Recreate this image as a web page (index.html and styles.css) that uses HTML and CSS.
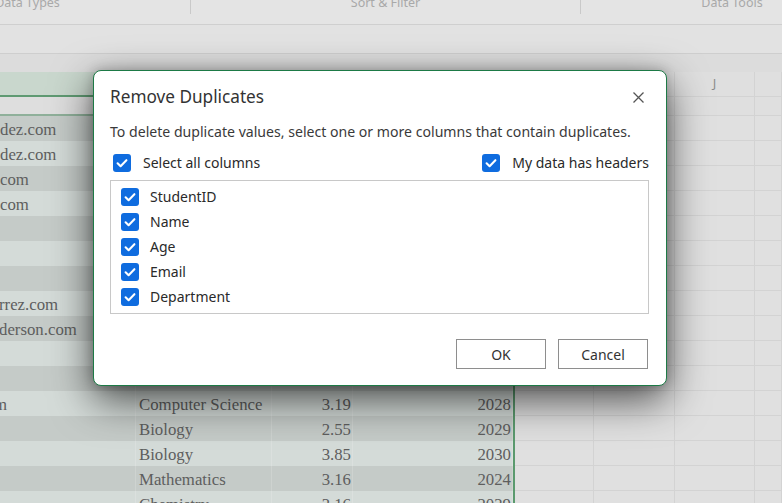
FILE: index.html
```html
<!DOCTYPE html>
<html lang="en">
<head>
<meta charset="utf-8">
<title>Remove Duplicates</title>
<link rel="stylesheet" href="styles.css">
</head>
<body>
<div class="app">
  <div class="ribbon">
    <div class="group g1"><span>Data Types</span></div>
    <div class="group g2"><span>Sort &amp; Filter</span></div>
    <div class="group g3"><span>Data Tools</span></div>
  </div>
  <div class="formula"></div>
  <div class="spacer"></div>
  <div class="sheet">
    <div class="row head">
      <div class="c s"></div><div class="c s"></div><div class="c s"></div><div class="c s"></div><div class="c s gl"></div>
      <div class="c r"></div><div class="c r"></div><div class="c r">J</div><div class="c r"></div>
    </div>
    <div class="row first">
      <div class="c s"></div><div class="c s"></div><div class="c s"></div><div class="c s"></div><div class="c s"></div>
      <div class="c r"></div><div class="c r"></div><div class="c r"></div><div class="c r"></div>
    </div>
    <div class="row dark"><div class="c s"><span class="t">dez.com</span></div><div class="c s"></div><div class="c s"></div><div class="c s"></div><div class="c gl"></div><div class="c r"></div><div class="c r"></div><div class="c r"></div><div class="c r"></div></div>
    <div class="row light"><div class="c s"><span class="t">dez.com</span></div><div class="c s"></div><div class="c s"></div><div class="c s"></div><div class="c gl"></div><div class="c r"></div><div class="c r"></div><div class="c r"></div><div class="c r"></div></div>
    <div class="row dark"><div class="c s"><span class="t">com</span></div><div class="c s"></div><div class="c s"></div><div class="c s"></div><div class="c gl"></div><div class="c r"></div><div class="c r"></div><div class="c r"></div><div class="c r"></div></div>
    <div class="row light"><div class="c s"><span class="t">com</span></div><div class="c s"></div><div class="c s"></div><div class="c s"></div><div class="c gl"></div><div class="c r"></div><div class="c r"></div><div class="c r"></div><div class="c r"></div></div>
    <div class="row dark"><div class="c s"></div><div class="c s"></div><div class="c s"></div><div class="c s"></div><div class="c gl"></div><div class="c r"></div><div class="c r"></div><div class="c r"></div><div class="c r"></div></div>
    <div class="row light"><div class="c s"></div><div class="c s"></div><div class="c s"></div><div class="c s"></div><div class="c gl"></div><div class="c r"></div><div class="c r"></div><div class="c r"></div><div class="c r"></div></div>
    <div class="row dark"><div class="c s"></div><div class="c s"></div><div class="c s"></div><div class="c s"></div><div class="c gl"></div><div class="c r"></div><div class="c r"></div><div class="c r"></div><div class="c r"></div></div>
    <div class="row light"><div class="c s"><span class="t cut1">rrez.com</span></div><div class="c s"></div><div class="c s"></div><div class="c s"></div><div class="c gl"></div><div class="c r"></div><div class="c r"></div><div class="c r"></div><div class="c r"></div></div>
    <div class="row dark"><div class="c s"><span class="t cut2">derson.com</span></div><div class="c s"></div><div class="c s"></div><div class="c s"></div><div class="c gl"></div><div class="c r"></div><div class="c r"></div><div class="c r"></div><div class="c r"></div></div>
    <div class="row light"><div class="c s"></div><div class="c s"></div><div class="c s"></div><div class="c s"></div><div class="c gl"></div><div class="c r"></div><div class="c r"></div><div class="c r"></div><div class="c r"></div></div>
    <div class="row dark"><div class="c s"></div><div class="c s"></div><div class="c s"></div><div class="c s"></div><div class="c gl"></div><div class="c r"></div><div class="c r"></div><div class="c r"></div><div class="c r"></div></div>
    <div class="row light"><div class="c s"><span class="t cut3">m</span></div><div class="c s">Computer Science</div><div class="c s n">3.19</div><div class="c s n">2028</div><div class="c gl"></div><div class="c r"></div><div class="c r"></div><div class="c r"></div><div class="c r"></div></div>
    <div class="row dark"><div class="c s"></div><div class="c s">Biology</div><div class="c s n">2.55</div><div class="c s n">2029</div><div class="c gl"></div><div class="c r"></div><div class="c r"></div><div class="c r"></div><div class="c r"></div></div>
    <div class="row light"><div class="c s"></div><div class="c s">Biology</div><div class="c s n">3.85</div><div class="c s n">2030</div><div class="c gl"></div><div class="c r"></div><div class="c r"></div><div class="c r"></div><div class="c r"></div></div>
    <div class="row dark"><div class="c s"></div><div class="c s">Mathematics</div><div class="c s n">3.16</div><div class="c s n">2024</div><div class="c gl"></div><div class="c r"></div><div class="c r"></div><div class="c r"></div><div class="c r"></div></div>
    <div class="row light"><div class="c s"></div><div class="c s">Chemistry</div><div class="c s n">3.16</div><div class="c s n">2029</div><div class="c gl"></div><div class="c r"></div><div class="c r"></div><div class="c r"></div><div class="c r"></div></div>
  </div>

  <div class="dialog" role="dialog" aria-label="Remove Duplicates">
    <div class="dlg-head">
      <h1 class="dlg-title">Remove Duplicates</h1>
      <button class="close" aria-label="Close">
        <svg width="11" height="11" viewBox="0 0 11 11"><path d="M0.5 0.5 L10.5 10.5 M10.5 0.5 L0.5 10.5" stroke="#555" stroke-width="1.3" fill="none"/></svg>
      </button>
    </div>
    <p class="dlg-desc">To delete duplicate values, select one or more columns that contain duplicates.</p>
    <div class="opts">
      <label class="chk"><span class="box"><svg width="18" height="18" viewBox="0 0 18 18"><path d="M4.6 9.3 L7.6 12.2 L13.4 6.2" stroke="#fff" stroke-width="2.1" fill="none" stroke-linecap="round" stroke-linejoin="round"/></svg></span>Select all columns</label>
      <label class="chk"><span class="box"><svg width="18" height="18" viewBox="0 0 18 18"><path d="M4.6 9.3 L7.6 12.2 L13.4 6.2" stroke="#fff" stroke-width="2.1" fill="none" stroke-linecap="round" stroke-linejoin="round"/></svg></span>My data has headers</label>
    </div>
    <div class="list">
      <label class="chk item"><span class="box"><svg width="18" height="18" viewBox="0 0 18 18"><path d="M4.6 9.3 L7.6 12.2 L13.4 6.2" stroke="#fff" stroke-width="2.1" fill="none" stroke-linecap="round" stroke-linejoin="round"/></svg></span>StudentID</label>
      <label class="chk item"><span class="box"><svg width="18" height="18" viewBox="0 0 18 18"><path d="M4.6 9.3 L7.6 12.2 L13.4 6.2" stroke="#fff" stroke-width="2.1" fill="none" stroke-linecap="round" stroke-linejoin="round"/></svg></span>Name</label>
      <label class="chk item"><span class="box"><svg width="18" height="18" viewBox="0 0 18 18"><path d="M4.6 9.3 L7.6 12.2 L13.4 6.2" stroke="#fff" stroke-width="2.1" fill="none" stroke-linecap="round" stroke-linejoin="round"/></svg></span>Age</label>
      <label class="chk item"><span class="box"><svg width="18" height="18" viewBox="0 0 18 18"><path d="M4.6 9.3 L7.6 12.2 L13.4 6.2" stroke="#fff" stroke-width="2.1" fill="none" stroke-linecap="round" stroke-linejoin="round"/></svg></span>Email</label>
      <label class="chk item"><span class="box"><svg width="18" height="18" viewBox="0 0 18 18"><path d="M4.6 9.3 L7.6 12.2 L13.4 6.2" stroke="#fff" stroke-width="2.1" fill="none" stroke-linecap="round" stroke-linejoin="round"/></svg></span>Department</label>
    </div>
    <div class="actions">
      <button class="btn">OK</button>
      <button class="btn">Cancel</button>
    </div>
  </div>
</div>
</body>
</html>
```

FILE: styles.css
```css
* { box-sizing: border-box; }
html, body { margin: 0; padding: 0; }
body {
  width: 782px;
  height: 503px;
  overflow: hidden;
  background: #e0e0e0;
  font-family: "Noto Sans", "Open Sans", sans-serif;
}
.app {
  position: relative;
  width: 782px;
  height: 503px;
  overflow: hidden;
}

/* ribbon */
.ribbon {
  display: flex;
  height: 25px;
  margin-left: -135px;
  background: #e4e4e4;
  border-bottom: 1px solid #cfcfcf;
}
.group {
  flex: none;
  height: 14px;
  display: flex;
  justify-content: center;
  align-items: flex-start;
  border-right: 1px solid #c9c9c9;
}
.group span {
  margin-top: -5px;
  font-size: 12.5px;
  line-height: 16px;
  color: #a9a9a9;
  white-space: nowrap;
}
.g1 { width: 326px; }
.g2 { width: 390px; }
.g3 { width: 302px; border-right: none; }

.formula {
  height: 29px;
  background: #e2e2e2;
  border-bottom: 1px solid #cecece;
}
.spacer {
  height: 18px;
  background: #dcdcdc;
}

/* sheet */
.row {
  display: grid;
  grid-template-columns: 136px 136px 81px 160px 2px 79px 81px 80px 1fr;
  height: 25px;
}
.c {
  font-family: "Liberation Serif", "Times New Roman", serif;
  font-size: 16.8px;
  line-height: 25px;
  padding-top: 1px;
  color: #5e5e5e;
  white-space: nowrap;
  overflow: hidden;
  padding-left: 3px;
}
.c.n { text-align: right; padding: 1px 1px 0 0; }
.s { border-right: 1px solid rgba(255,255,255,0.16); }
.r {
  background: #e0e0e0;
  border-right: 1px solid #d3d3d3;
  border-bottom: 1px solid #d3d3d3;
}
.row.dark .s { background: #c5cbc8; }
.row.light .s { background: #d4dbd8; }
.gl { background: #5b9a6e; }

.row.head { height: 25px; }
.row.head .s { background: #c9d7cd; border-right: none; border-bottom: 2px solid #5f9a72; }
.row.head .r {
  background: #dfdfdf;
  font-family: "Noto Sans", sans-serif;
  font-size: 13px;
  color: #8c8c8c;
  text-align: center;
  padding: 0 0 2px 0;
  line-height: 22px;
  border-right: 1px solid #d3d3d3;
}
.row.first { height: 19px; }
.row.first .s { background: #dedede; border-right: none; border-bottom: 2px solid #8fb09a; }
.row.first .r { background: #dfdfdf; }

.t { display: inline-block; margin-left: -3px; }
.t.cut1 { margin-left: -4px; }
.t.cut2 { margin-left: -4px; }
.t.cut3 { margin-left: -9px; }

/* dialog */
.dialog {
  position: absolute;
  left: 93px;
  top: 70px;
  width: 574px;
  height: 316px;
  background: #ffffff;
  border: 1px solid #1d7a46;
  border-radius: 8px;
  box-shadow: 0 14px 42px rgba(0,0,0,0.66), 0 0 12px rgba(0,0,0,0.22);
  display: flex;
  flex-direction: column;
  color: #262626;
}
.dlg-head {
  display: flex;
  justify-content: space-between;
  align-items: center;
  padding: 14px 22px 0 16px;
  height: 38px;
}
.dlg-title {
  margin: 0;
  font-size: 17.2px;
  font-weight: 400;
  line-height: 24px;
  color: #333333;
}
.close {
  border: none;
  background: none;
  padding: 0;
  width: 11px;
  height: 11px;
  display: block;
}
.close svg { display: block; }
.dlg-desc {
  margin: 13px 0 0 16px;
  font-size: 14.1px;
  line-height: 20px;
  color: #3a3a3a;
}
.opts {
  display: flex;
  justify-content: space-between;
  margin-top: 11px;
  padding: 0 17px 0 19px;
  height: 20px;
}
.chk {
  display: flex;
  align-items: center;
  gap: 12px;
  font-size: 14px;
  line-height: 20px;
  color: #2a2a2a;
}
.box {
  width: 18px;
  height: 18px;
  border-radius: 3px;
  background: #0f6cdf;
  display: block;
  flex: none;
}
.box svg { display: block; }
.list {
  margin: 7px 17px 0 16px;
  height: 134px;
  border: 1px solid #c8c8c8;
  padding: 3px 10px 0 10px;
  display: flex;
  flex-direction: column;
}
.item { height: 25px; gap: 11px; flex: none; }
.actions {
  display: flex;
  justify-content: flex-end;
  gap: 12px;
  margin-top: 25px;
  padding-right: 18px;
}
.btn {
  width: 90px;
  height: 30px;
  border: 1px solid #8e8e8e;
  background: #ffffff;
  font-family: "Noto Sans", sans-serif;
  font-size: 14px;
  color: #333;
  padding: 0;
}
```
